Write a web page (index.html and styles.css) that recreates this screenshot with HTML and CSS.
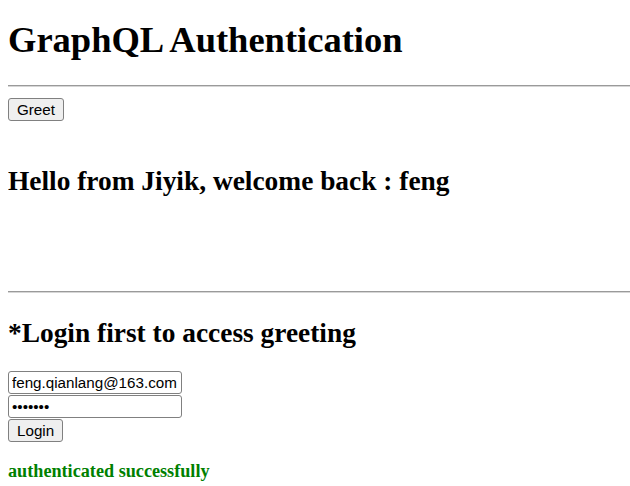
FILE: index.html
```html
<!DOCTYPE html>
<html>
<head>
<meta charset="utf-8">
<link rel="stylesheet" href="styles.css">
</head>
<body>
<h1 class="title">GraphQL Authentication</h1>
<hr class="rule rule-top">
<button class="btn">Greet</button>
<h2 class="greeting">Hello from Jiyik, welcome back : feng</h2>
<hr class="rule rule-mid">
<h2 class="login-head">*Login first to access greeting</h2>
<form class="login-form">
<input class="field" type="text" value="feng.qianlang@163.com">
<input class="field" type="password" value="1234567">
<button class="btn" type="button">Login</button>
</form>
<h4 class="status">authenticated successfully</h4>
</body>
</html>
```
FILE: styles.css
```css
body {
  font-family: "Liberation Serif", "Times New Roman", serif;
  margin: 8px 0 8px 8px;
  color: #000;
}
.title {
  font-size: 36.5px;
  line-height: 42px;
  font-weight: bold;
  margin: 11px 0 24px;
}
.rule {
  border: 0;
  height: 0;
  border-top: 1px solid #9a9a9a;
  border-bottom: 1px solid #d6d6d6;
  margin: 0;
}
.rule-top {
  margin-bottom: 11px;
}
.rule-mid {
  margin-top: 94px;
  margin-bottom: 24px;
}
.btn, .field {
  display: block;
  font-family: "Liberation Sans", Arial, sans-serif;
  font-size: 15.2px;
  box-sizing: border-box;
  height: 23px;
  margin: 0;
}
.btn {
  padding: 0 8px;
  border: 1px solid #808080;
  border-radius: 3px;
  background: #efefef;
  color: #000;
}
.field {
  width: 174px;
  padding: 1px 3px;
  border: 1px solid #808080;
  border-radius: 3px;
  background: #fff;
  color: #000;
}
.login-form {
  margin: 22px 0 0;
  display: flex;
  flex-direction: column;
  align-items: flex-start;
  gap: 1px;
}
.greeting, .login-head {
  font-size: 27.4px;
  line-height: 32px;
  font-weight: bold;
  margin: 0;
}
.greeting {
  margin-top: 44px;
}
.status {
  color: #008000;
  font-size: 18.2px;
  line-height: 21px;
  font-weight: bold;
  margin: 19px 0 0;
}
```
